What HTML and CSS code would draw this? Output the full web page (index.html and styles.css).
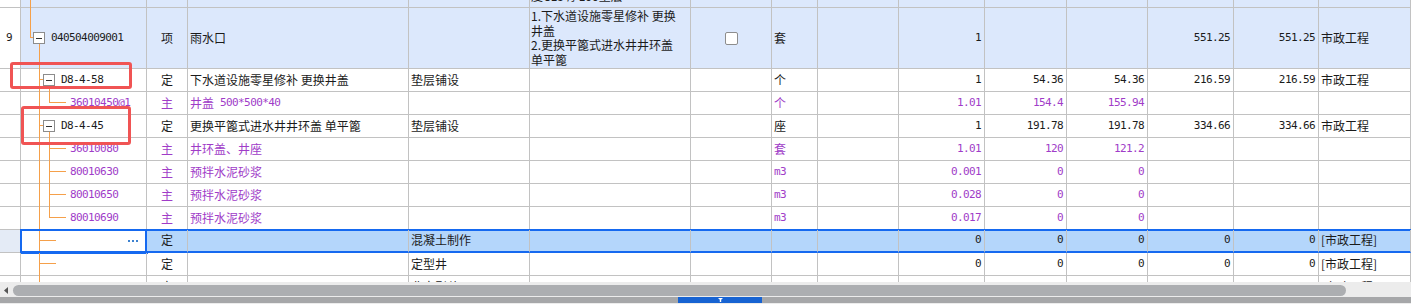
FILE: index.html
```html
<!DOCTYPE html>
<html lang="zh-CN">
<head>
<meta charset="utf-8">
<title>清单</title>
<link rel="stylesheet" href="styles.css">
</head>
<body>
<div class="sheet">
  <div class="row tall cut hl">
    <div class="c idx"></div>
    <div class="c tree t-top"></div>
    <div class="c"></div>
    <div class="c"></div>
    <div class="c"></div>
    <div class="c ml ml-up"><div>1.检查井砌筑<br>2.井盖安装<br>3.混凝土基础<br>度C15 厚100垫层</div></div>
    <div class="c"></div>
    <div class="c"></div>
    <div class="c"></div>
    <div class="c"></div>
    <div class="c"></div>
    <div class="c"></div>
    <div class="c"></div>
    <div class="c"></div>
    <div class="c"></div>
  </div>

  <div class="row tall hl">
    <div class="c idx mono">9</div>
    <div class="c tree t-root"><span class="tb tb-r"></span><span class="mono">040504009001</span></div>
    <div class="c mid">项</div>
    <div class="c">雨水口</div>
    <div class="c"></div>
    <div class="c ml"><div>1.下水道设施零星修补 更换<br>井盖<br>2.更换平篦式进水井井环盖<br>单平篦</div></div>
    <div class="c mid"><span class="cb"></span></div>
    <div class="c">套</div>
    <div class="c"></div>
    <div class="c n">1</div>
    <div class="c n"></div>
    <div class="c n"></div>
    <div class="c n">551.25</div>
    <div class="c n">551.25</div>
    <div class="c">市政工程</div>
  </div>

  <div class="row">
    <div class="c idx"></div>
    <div class="c tree t-l2"><span class="tb tb-2"></span><span class="mono">D8-4-58</span></div>
    <div class="c mid">定</div>
    <div class="c">下水道设施零星修补 更换井盖</div>
    <div class="c">垫层铺设</div>
    <div class="c"></div>
    <div class="c"></div>
    <div class="c">个</div>
    <div class="c"></div>
    <div class="c n">1</div>
    <div class="c n">54.36</div>
    <div class="c n">54.36</div>
    <div class="c n">216.59</div>
    <div class="c n">216.59</div>
    <div class="c">市政工程</div>
  </div>

  <div class="row p">
    <div class="c idx"></div>
    <div class="c tree t-cl lv3"><span class="mono">36010450@1</span></div>
    <div class="c mid">主</div>
    <div class="c">井盖<span class="mono gap">500*500*40</span></div>
    <div class="c"></div>
    <div class="c"></div>
    <div class="c"></div>
    <div class="c">个</div>
    <div class="c"></div>
    <div class="c n">1.01</div>
    <div class="c n">154.4</div>
    <div class="c n">155.94</div>
    <div class="c n"></div>
    <div class="c n"></div>
    <div class="c"></div>
  </div>

  <div class="row">
    <div class="c idx"></div>
    <div class="c tree t-l2"><span class="tb tb-2"></span><span class="mono">D8-4-45</span></div>
    <div class="c mid">定</div>
    <div class="c">更换平篦式进水井井环盖 单平篦</div>
    <div class="c">垫层铺设</div>
    <div class="c"></div>
    <div class="c"></div>
    <div class="c">座</div>
    <div class="c"></div>
    <div class="c n">1</div>
    <div class="c n">191.78</div>
    <div class="c n">191.78</div>
    <div class="c n">334.66</div>
    <div class="c n">334.66</div>
    <div class="c">市政工程</div>
  </div>

  <div class="row p">
    <div class="c idx"></div>
    <div class="c tree t-c lv3"><span class="mono">36010080</span></div>
    <div class="c mid">主</div>
    <div class="c">井环盖、井座</div>
    <div class="c"></div>
    <div class="c"></div>
    <div class="c"></div>
    <div class="c">套</div>
    <div class="c"></div>
    <div class="c n">1.01</div>
    <div class="c n">120</div>
    <div class="c n">121.2</div>
    <div class="c n"></div>
    <div class="c n"></div>
    <div class="c"></div>
  </div>

  <div class="row p">
    <div class="c idx"></div>
    <div class="c tree t-c lv3"><span class="mono">80010630</span></div>
    <div class="c mid">主</div>
    <div class="c">预拌水泥砂浆</div>
    <div class="c"></div>
    <div class="c"></div>
    <div class="c"></div>
    <div class="c mono">m3</div>
    <div class="c"></div>
    <div class="c n">0.001</div>
    <div class="c n">0</div>
    <div class="c n">0</div>
    <div class="c n"></div>
    <div class="c n"></div>
    <div class="c"></div>
  </div>

  <div class="row p">
    <div class="c idx"></div>
    <div class="c tree t-c lv3"><span class="mono">80010650</span></div>
    <div class="c mid">主</div>
    <div class="c">预拌水泥砂浆</div>
    <div class="c"></div>
    <div class="c"></div>
    <div class="c"></div>
    <div class="c mono">m3</div>
    <div class="c"></div>
    <div class="c n">0.028</div>
    <div class="c n">0</div>
    <div class="c n">0</div>
    <div class="c n"></div>
    <div class="c n"></div>
    <div class="c"></div>
  </div>

  <div class="row p">
    <div class="c idx"></div>
    <div class="c tree t-cl lv3"><span class="mono">80010690</span></div>
    <div class="c mid">主</div>
    <div class="c">预拌水泥砂浆</div>
    <div class="c"></div>
    <div class="c"></div>
    <div class="c"></div>
    <div class="c mono">m3</div>
    <div class="c"></div>
    <div class="c n">0.017</div>
    <div class="c n">0</div>
    <div class="c n">0</div>
    <div class="c n"></div>
    <div class="c n"></div>
    <div class="c"></div>
  </div>

  <div class="row sel">
    <div class="c idx"></div>
    <div class="c tree t-l1 edit"><svg class="dots" width="10" height="2" viewBox="0 0 10 2"><rect x="0" y="0" width="2" height="2" fill="#3d82d0"/><rect x="4" y="0" width="2" height="2" fill="#3d82d0"/><rect x="8" y="0" width="2" height="2" fill="#3d82d0"/></svg></div>
    <div class="c mid">定</div>
    <div class="c"></div>
    <div class="c">混凝土制作</div>
    <div class="c"></div>
    <div class="c"></div>
    <div class="c"></div>
    <div class="c"></div>
    <div class="c n">0</div>
    <div class="c n">0</div>
    <div class="c n">0</div>
    <div class="c n">0</div>
    <div class="c n">0</div>
    <div class="c">[市政工程]</div>
  </div>

  <div class="row">
    <div class="c idx"></div>
    <div class="c tree t-l1"></div>
    <div class="c mid">定</div>
    <div class="c"></div>
    <div class="c">定型井</div>
    <div class="c"></div>
    <div class="c"></div>
    <div class="c"></div>
    <div class="c"></div>
    <div class="c n">0</div>
    <div class="c n">0</div>
    <div class="c n">0</div>
    <div class="c n">0</div>
    <div class="c n">0</div>
    <div class="c">[市政工程]</div>
  </div>

  <div class="row">
    <div class="c idx"></div>
    <div class="c tree t-v"></div>
    <div class="c mid">定</div>
    <div class="c"></div>
    <div class="c">非定型井</div>
    <div class="c"></div>
    <div class="c"></div>
    <div class="c"></div>
    <div class="c"></div>
    <div class="c n">0</div>
    <div class="c n">0</div>
    <div class="c n">0</div>
    <div class="c n">0</div>
    <div class="c n">0</div>
    <div class="c">[市政工程]</div>
  </div>
</div>

<div class="hbar">
  <svg class="arr" width="4" height="7" viewBox="0 0 4 7"><polygon points="4,0 4,7 0,3.5" fill="#555"/></svg>
  <div class="thumb"></div>
</div>
<div class="nav">
  <div class="track">
    <div class="seg"><svg width="5" height="4" viewBox="0 0 5 4"><polygon points="0,0 5,0 3.2,1.8 3.2,4 1.8,4 1.8,1.8" fill="#fff"/></svg></div>
  </div>
</div>

<div class="mark m1"></div>
<div class="mark m2"></div>
</body>
</html>
```

FILE: styles.css
```css
* { box-sizing: border-box; }
html, body { margin: 0; padding: 0; }
body {
  position: relative;
  width: 1411px;
  height: 304px;
  overflow: hidden;
  background: #fff;
  color: #1b1b1b;
  font-family: "Noto Sans CJK SC", "Liberation Sans", sans-serif;
  font-size: 12px;
}

.sheet { height: 282px; overflow: hidden; }

.row {
  display: grid;
  grid-template-columns: 21px 126px 41px 221px 121px 161px 81px 46px 81px 86px 82px 81px 86px 85px 92px;
  height: 23px;
}
.row.tall { height: 61px; }
.row.cut { margin-top: -53px; }

.c {
  display: flex;
  align-items: center;
  overflow: hidden;
  white-space: nowrap;
  padding-left: 2px;
  border-right: 1px solid #c2c2c2;
  border-bottom: 1px solid #c2c2c2;
  line-height: 14.5px;
}
.hl .c { background-color: #dce8fc; }
.hl .c.idx { background-color: #fff; }

.idx { padding-left: 6px; }
.mid { justify-content: center; padding-left: 0; }
.n {
  justify-content: flex-end;
  padding: 0 3px 0 0;
  font-family: "DejaVu Sans Mono", "Liberation Mono", monospace;
  font-size: 11px;
  letter-spacing: -0.6px;
}
.mono {
  font-family: "DejaVu Sans Mono", "Liberation Mono", monospace;
  font-size: 11px;
  letter-spacing: -0.6px;
}
.gap { margin-left: 6px; }
.p { color: #a03cc8; }

.ml { padding-left: 1px; }
.ml-up { padding-bottom: 6px; }

.cb {
  width: 13px;
  height: 13px;
  border: 1px solid #8d8d8d;
  border-radius: 2px;
  background: #fff;
}

/* tree column */
.tree {
  --o: linear-gradient(#f5a04a, #f5a04a);
  padding: 0 0 1px 0;
  border-bottom: 0;
  background-repeat: no-repeat;
  background-image: var(--img), linear-gradient(#c2c2c2, #c2c2c2);
  background-position: var(--pos), 0 100%;
  background-size: var(--sz), 100% 1px;
}
.t-top  { --img: var(--o); --pos: 9px 0; --sz: 1px 100%; }
.t-root { --img: var(--o), var(--o), var(--o); --pos: 9px 0, 9px 29px, 18px 36px; --sz: 1px 30px, 4px 1px, 1px 100%; }
.t-l2   { --img: var(--o), var(--o), var(--o); --pos: 18px 0, 18px 10px, 28px 17px; --sz: 1px 100%, 4px 1px, 1px 100%; }
.t-c    { --img: var(--o), var(--o), var(--o); --pos: 18px 0, 28px 0, 28px 10px; --sz: 1px 100%, 1px 100%, 17px 1px; }
.t-cl   { --img: var(--o), var(--o), var(--o); --pos: 18px 0, 28px 0, 28px 10px; --sz: 1px 100%, 1px 11px, 17px 1px; }
.t-l1   { --img: var(--o), var(--o); --pos: 18px 0, 18px 10px; --sz: 1px 100%, 17px 1px; }
.t-v    { --img: var(--o); --pos: 18px 0; --sz: 1px 100%; }
.lv3 { padding-left: 49px; }

.tb {
  flex: none;
  display: flex;
  align-items: center;
  justify-content: center;
  width: 12px;
  height: 12px;
  border: 1px solid #8c8c8c;
  background: #fff;
  margin-right: 6px;
}
.tb::before { content: ""; width: 6px; height: 1px; background: #333; }
.tb-r { margin-left: 12px; }
.tb-2 { margin-left: 22px; }

/* selected row */
.sel .c {
  background-color: #b4d6fb;
  border-bottom: 2px solid #1569f0;
  box-shadow: 0 -1px 0 #1569f0, inset 0 1px 0 #1569f0;
}
.sel .c.idx {
  background-color: #e4ebf6;
  border-bottom: 1px solid #c2c2c2;
  box-shadow: none;
}
.sel .tree {
  padding-bottom: 0;
  background-image: var(--img);
  background-position: var(--pos);
  background-size: var(--sz);
}
.sel .edit {
  background-color: #fff;
  border-right: 2px solid #1569f0;
  box-shadow: 0 0 0 1px #1569f0, inset 1px 1px 0 #1569f0;
}
.dots { margin-left: auto; margin-right: 7px; flex: none; }

/* scroll bars */
.hbar {
  height: 14px;
  padding-top: 3px;
  background: #ececec;
  display: flex;
  align-items: center;
}
.arr { flex: none; margin-left: 4px; }
.thumb {
  flex: none;
  margin-left: 5px;
  width: 1333px;
  height: 11px;
  border-radius: 6px;
  background: #acaeb1;
}
.nav { height: 8px; padding: 1px 0; background: #ececec; }
.track { height: 6px; background: #a6a7a9; display: flex; }
.seg {
  margin-left: 678px;
  width: 84px;
  background: #1763d2;
  display: flex;
  justify-content: center;
  align-items: flex-start;
  padding-top: 1px;
}

/* annotation boxes */
.mark {
  position: absolute;
  border: 3px solid #f05454;
  border-radius: 3px;
  pointer-events: none;
}
.m1 { left: 10px; top: 62px; width: 122px; height: 27px; }
.m2 { left: 21px; top: 106px; width: 110px; height: 39px; }
```
